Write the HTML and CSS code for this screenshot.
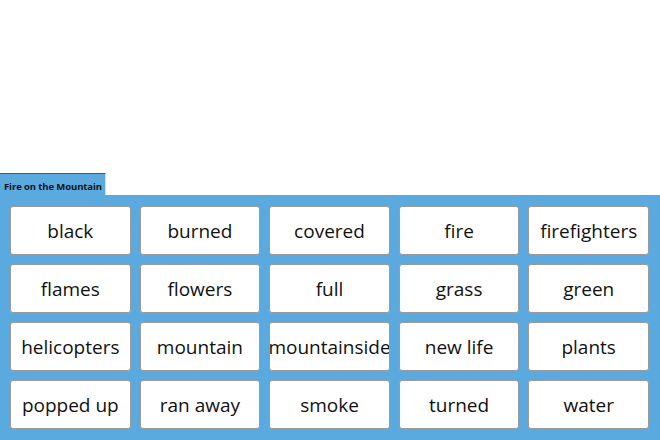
FILE: index.html
```html
<!DOCTYPE html>
<html>
<head>
<meta charset="utf-8">
<link rel="stylesheet" href="styles.css">
</head>
<body>
<div class="spacer"></div>
<div class="tabbar"><div class="tab">Fire on the Mountain</div></div>
<div class="panel">
  <div class="card">black</div>
  <div class="card">burned</div>
  <div class="card">covered</div>
  <div class="card">fire</div>
  <div class="card">firefighters</div>
  <div class="card">flames</div>
  <div class="card">flowers</div>
  <div class="card">full</div>
  <div class="card">grass</div>
  <div class="card">green</div>
  <div class="card">helicopters</div>
  <div class="card">mountain</div>
  <div class="card">mountainside</div>
  <div class="card">new life</div>
  <div class="card">plants</div>
  <div class="card">popped up</div>
  <div class="card">ran away</div>
  <div class="card">smoke</div>
  <div class="card">turned</div>
  <div class="card">water</div>
</div>
</body>
</html>
```
FILE: styles.css
```css
html, body {
  margin: 0;
  padding: 0;
  background: #ffffff;
  width: 660px;
  height: 440px;
  overflow: hidden;
}
.spacer {
  height: 173px;
}
.tabbar {
  display: flex;
  height: 22px;
}
.tab {
  width: 106px;
  box-sizing: border-box;
  background: #5aaae0;
  border-top: 1px solid #555;
  border-right: 1px solid #cfe3f2;
  font-family: "Open Sans", "Liberation Sans", sans-serif;
  font-weight: 700;
  font-size: 9.5px;
  color: #111;
  padding: 6px 0 0 4px;
  white-space: nowrap;
  letter-spacing: -0.1px;
}
.panel {
  background: #5aaae0;
  height: 245px;
  box-sizing: border-box;
  padding: 11px 11px 11px 10px;
  display: grid;
  grid-template-columns: repeat(5, 1fr);
  grid-template-rows: repeat(4, 49px);
  gap: 9px;
}
.card {
  background: #fff;
  border: 1px solid #9a9a9a;
  border-radius: 3px;
  display: flex;
  align-items: center;
  justify-content: center;
  padding-top: 1px;
  font-family: "Open Sans", "Liberation Sans", sans-serif;
  font-size: 19px;
  color: #111;
  white-space: nowrap;
  overflow: hidden;
}
```
